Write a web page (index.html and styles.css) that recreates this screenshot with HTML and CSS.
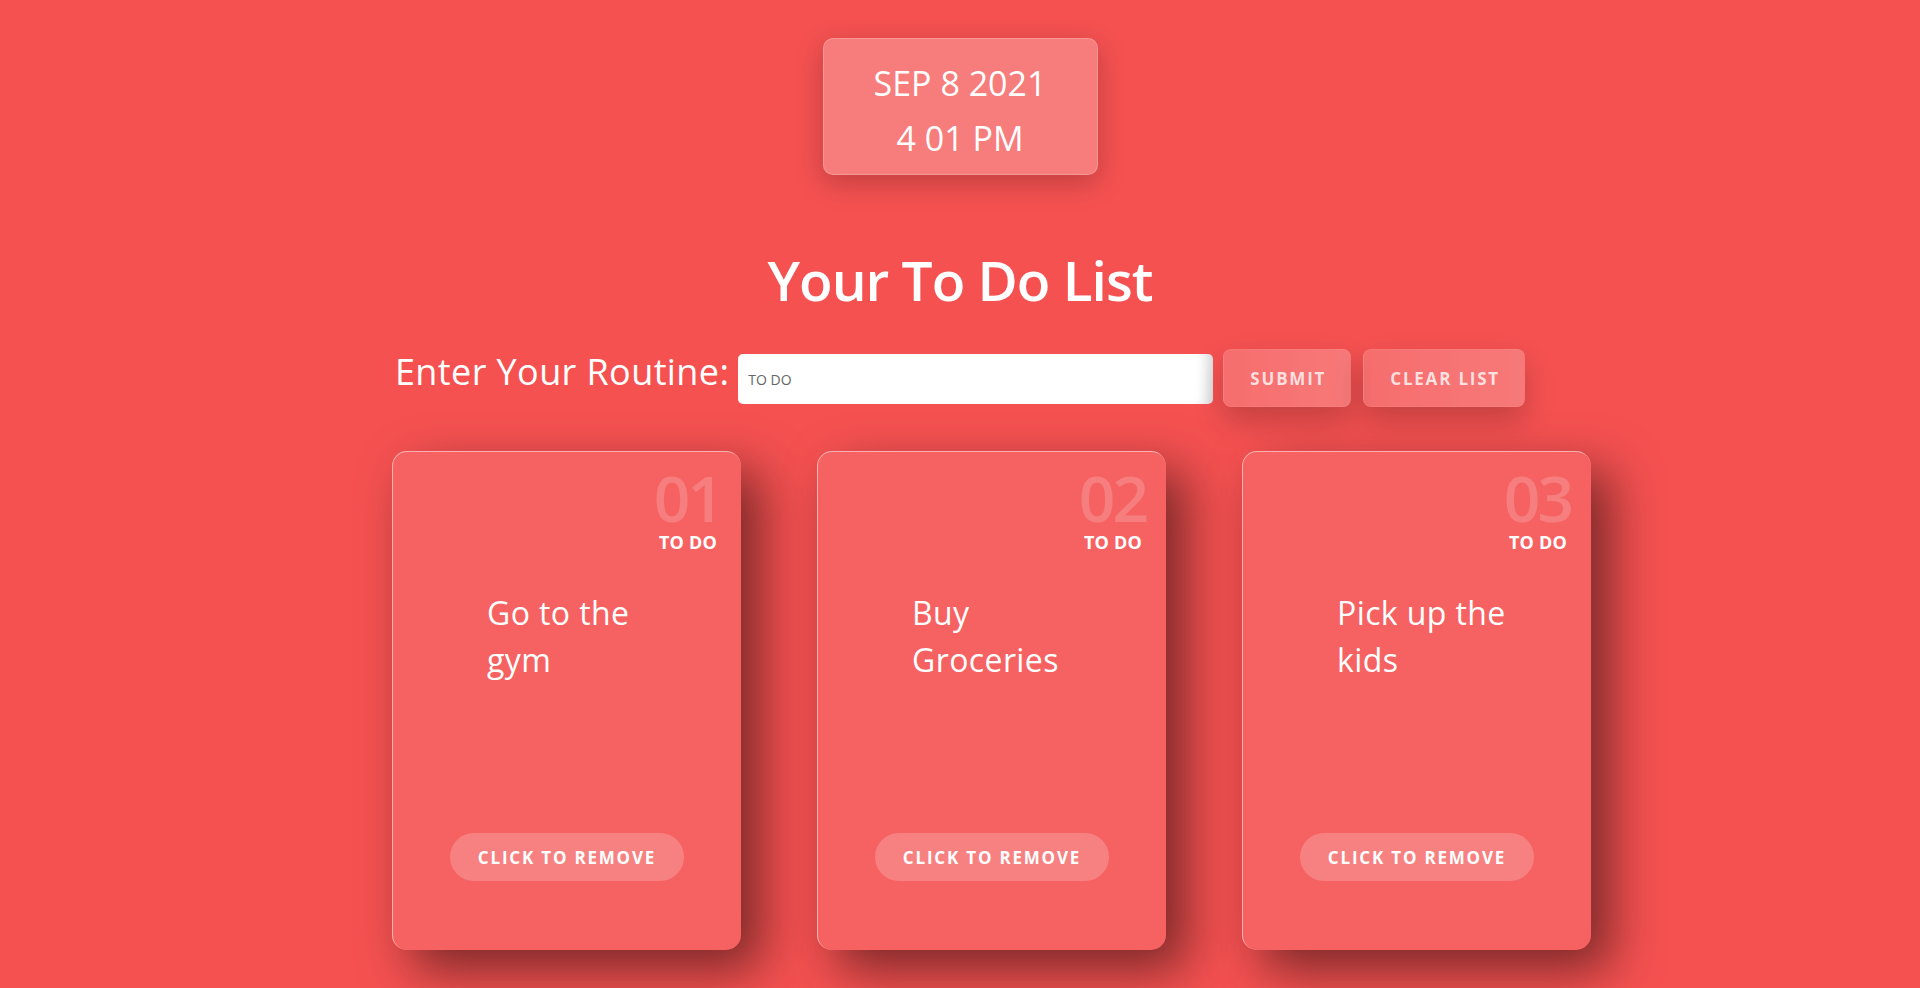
FILE: index.html
```html
<!DOCTYPE html>
<html lang="en">
<head>
<meta charset="utf-8">
<title>To Do List</title>
<link rel="stylesheet" href="styles.css">
</head>
<body>
  <main class="page">
    <div class="clock">
      <div class="clock-line">SEP 8 2021</div>
      <div class="clock-line">4 01 PM</div>
    </div>

    <h1 class="title">Your To Do List</h1>

    <form class="entry">
      <label class="entry-label" for="task">Enter Your Routine:</label>
      <input class="entry-input" id="task" type="text" placeholder="TO DO">
      <button class="entry-btn" type="button">SUBMIT</button>
      <button class="entry-btn" type="button">CLEAR LIST</button>
    </form>

    <section class="cards">
      <article class="card">
        <div class="card-num">01</div>
        <div class="card-tag">TO DO</div>
        <p class="card-text">Go to the gym</p>
        <button class="card-btn" type="button">CLICK TO REMOVE</button>
      </article>
      <article class="card">
        <div class="card-num">02</div>
        <div class="card-tag">TO DO</div>
        <p class="card-text">Buy Groceries</p>
        <button class="card-btn" type="button">CLICK TO REMOVE</button>
      </article>
      <article class="card">
        <div class="card-num">03</div>
        <div class="card-tag">TO DO</div>
        <p class="card-text">Pick up the kids</p>
        <button class="card-btn" type="button">CLICK TO REMOVE</button>
      </article>
    </section>
  </main>
</body>
</html>
```

FILE: styles.css
```css
* { box-sizing: border-box; }

html, body {
  margin: 0;
  padding: 0;
}

body {
  background: #f55151;
  font-family: "Open Sans", "Noto Sans", sans-serif;
  color: #fff;
  min-height: 988px;
  overflow: hidden;
}

.page {
  display: flex;
  flex-direction: column;
  align-items: center;
  padding-top: 38px;
}

.clock {
  width: 275px;
  height: 137px;
  padding-top: 17px;
  border-radius: 10px;
  background: rgba(255, 255, 255, 0.25);
  border: 1px solid rgba(255, 255, 255, 0.2);
  box-shadow: 0 8px 28px rgba(0, 0, 0, 0.22);
  text-align: center;
}

.clock-line {
  font-size: 34px;
  line-height: 55px;
  font-weight: 400;
}

.title {
  margin: 71px 0 0;
  font-size: 55px;
  line-height: 67px;
  font-weight: 600;
  letter-spacing: -1px;
}

.entry {
  display: flex;
  align-items: baseline;
  margin-top: 36px;
}

.entry-label {
  font-size: 36px;
  line-height: 36px;
  letter-spacing: 0.4px;
  margin-right: 9px;
}

.entry-input {
  width: 475px;
  height: 50px;
  border: none;
  border-radius: 5px;
  background: #fff;
  padding: 0 10px;
  font-family: inherit;
  font-size: 14px;
  color: #555;
  box-shadow: inset -14px 0 14px -10px rgba(0, 0, 0, 0.18);
  outline: none;
  margin-right: 10px;
}

.entry-input::placeholder {
  color: #666;
}

.entry-btn {
  height: 58px;
  padding: 0 24px 0 26px;
  border: 1px solid rgba(255, 255, 255, 0.06);
  border-radius: 8px;
  background: linear-gradient(90deg, rgba(255, 255, 255, 0.17), rgba(255, 255, 255, 0.23));
  color: rgba(255, 255, 255, 0.78);
  font-family: inherit;
  font-size: 17px;
  font-weight: 700;
  letter-spacing: 1.8px;
  box-shadow: 0 14px 30px rgba(0, 0, 0, 0.2);
  margin-right: 12px;
}

.entry-btn:last-child { margin-right: 0; }

.cards {
  display: flex;
  gap: 76px;
  margin-top: 44px;
  padding-left: 63px;
}

.card {
  width: 349px;
  height: 499px;
  display: flex;
  flex-direction: column;
  border-radius: 15px;
  background: rgba(255, 255, 255, 0.1);
  border-top: 1px solid rgba(255, 255, 255, 0.5);
  border-left: 1px solid rgba(255, 255, 255, 0.5);
  box-shadow: 20px 20px 50px rgba(0, 0, 0, 0.5);
  padding: 14px 20px 0 0;
}

.card-num {
  align-self: flex-end;
  font-size: 64px;
  line-height: 64px;
  font-weight: 600;
  letter-spacing: -3px;
  color: rgba(255, 255, 255, 0.18);
}

.card-tag {
  align-self: flex-end;
  margin-right: 4px;
  margin-top: 1px;
  font-size: 18px;
  line-height: 22px;
  font-weight: 700;
  letter-spacing: 0.2px;
}

.card-text {
  margin: 36px 0 0 94px;
  width: 178px;
  font-size: 32px;
  line-height: 47px;
  font-weight: 400;
  letter-spacing: 0.4px;
}

.card-btn {
  align-self: center;
  margin: auto 0 69px 20px;
  width: 234px;
  height: 48px;
  border: none;
  border-radius: 24px;
  background: rgba(255, 255, 255, 0.2);
  color: #fff;
  font-family: inherit;
  font-size: 17px;
  font-weight: 700;
  letter-spacing: 1.8px;
}
```
